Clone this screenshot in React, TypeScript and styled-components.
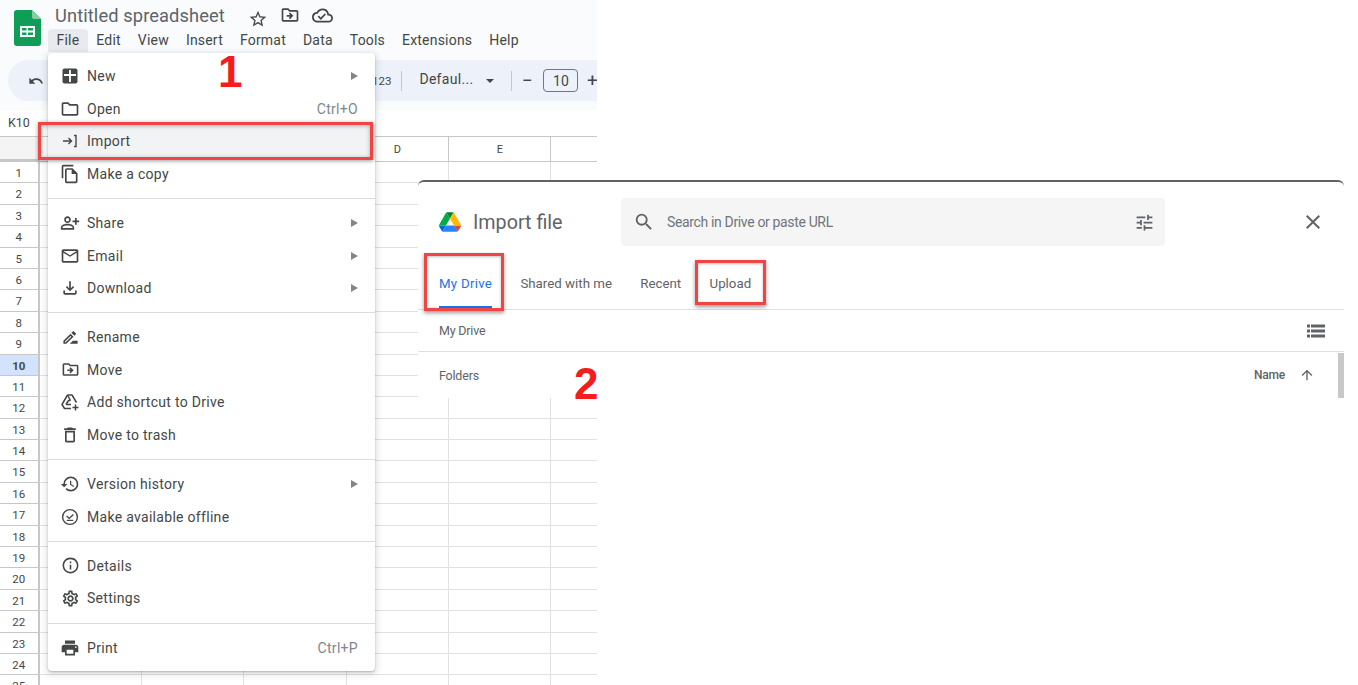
import styled, { createGlobalStyle } from 'styled-components';
import type { ReactNode } from 'react';
import {
  MdArrowUpward,
  MdClose,
  MdHistory,
  MdInfoOutline,
  MdOutlineCloudDone,
  MdOutlineDelete,
  MdOutlineDriveFileMove,
  MdOutlineDriveFileRenameOutline,
  MdOutlineEmail,
  MdOutlineFileCopy,
  MdOutlineFileDownload,
  MdOutlineFolder,
  MdOutlinePersonAddAlt,
  MdOutlineSettings,
  MdOutlineStarBorder,
  MdPrint,
  MdSearch,
  MdTune,
  MdUndo,
} from 'react-icons/md';

type MenuEntry = {
  label: string;
  icon: ReactNode;
  shortcut?: string;
  submenu?: boolean;
  active?: boolean;
};

const NewIcon = () => (
  <svg width="16" height="16" viewBox="0 0 16 16">
    <rect x="0.5" y="0.5" width="15" height="15" rx="2" fill="#444746" />
    <path d="M8 2v12M2 7h12" stroke="#fff" strokeWidth="1.8" fill="none" />
  </svg>
);

const ImportIcon = () => (
  <svg width="16" height="16" viewBox="0 0 16 16" fill="none" stroke="#444746" strokeWidth="1.4">
    <path d="M1 8h8M6.500 5l3 3-3 3" />
    <path d="M12 2.500h2v11h-2" />
  </svg>
);

const OfflineIcon = () => (
  <svg width="18" height="18" viewBox="0 0 18 18" fill="none" stroke="#444746" strokeWidth="1.4">
    <circle cx="9" cy="9" r="7.400" />
    <path d="M5.600 8l2.600 2.400L12.400 6.400M5.800 12.400h6.400" />
  </svg>
);

const AddShortcutIcon = () => (
  <svg width="20" height="20" viewBox="0 0 20 20" fill="none" stroke="#444746" strokeWidth="1.5">
    <path d="M7.500 3h4.500l4.500 7.500M7.500 3L2 12.500 4.500 16.500H11" strokeLinejoin="round" />
    <path d="M7.500 3l3 5.500M6 12.500l2.500-4 2 0M6 12.500h5" strokeLinejoin="round" />
    <path d="M15.500 12.500v6M12.500 15.500h6" />
  </svg>
);

const ListViewIcon = () => (
  <svg width="18" height="14" viewBox="0 0 18 14" fill="#5f6368">
    <rect x="0" y="0.500" width="3" height="3" />
    <rect x="4" y="0.500" width="14" height="3" />
    <rect x="0" y="5.500" width="3" height="3" />
    <rect x="4" y="5.500" width="14" height="3" />
    <rect x="0" y="10.500" width="3" height="3" />
    <rect x="4" y="10.500" width="14" height="3" />
  </svg>
);

const menuGroups: MenuEntry[][] = [
  [
    { label: 'New', icon: <NewIcon />, submenu: true },
    { label: 'Open', icon: <MdOutlineFolder size={20} />, shortcut: 'Ctrl+O' },
    { label: 'Import', icon: <ImportIcon />, active: true },
    { label: 'Make a copy', icon: <MdOutlineFileCopy size={20} /> },
  ],
  [
    { label: 'Share', icon: <MdOutlinePersonAddAlt size={20} />, submenu: true },
    { label: 'Email', icon: <MdOutlineEmail size={20} />, submenu: true },
    { label: 'Download', icon: <MdOutlineFileDownload size={20} />, submenu: true },
  ],
  [
    { label: 'Rename', icon: <MdOutlineDriveFileRenameOutline size={19} /> },
    { label: 'Move', icon: <MdOutlineDriveFileMove size={19} /> },
    { label: 'Add shortcut to Drive', icon: <AddShortcutIcon /> },
    { label: 'Move to trash', icon: <MdOutlineDelete size={20} /> },
  ],
  [
    { label: 'Version history', icon: <MdHistory size={20} />, submenu: true },
    { label: 'Make available offline', icon: <OfflineIcon /> },
  ],
  [
    { label: 'Details', icon: <MdInfoOutline size={19} /> },
    { label: 'Settings', icon: <MdOutlineSettings size={19} /> },
  ],
  [{ label: 'Print', icon: <MdPrint size={20} />, shortcut: 'Ctrl+P' }],
];

const menuBarItems = ['File', 'Edit', 'View', 'Insert', 'Format', 'Data', 'Tools', 'Extensions', 'Help'];
// A, B and C sit under the open menu, so only these letters show
const columns = ['', '', '', 'D', 'E', ''];
const rows = Array.from({ length: 25 }, (_, i) => i + 1);

function SheetGrid() {
  return (
    <Grid>
      <Corner />
      {columns.map((c, i) => (
        <ColumnHead key={i}>{c}</ColumnHead>
      ))}
      {rows.map((r) => (
        <GridRow key={r}>
          <RowHead $selected={r === 10}>{r}</RowHead>
          {columns.map((_, i) => (
            <Cell key={i} />
          ))}
        </GridRow>
      ))}
    </Grid>
  );
}

function FileMenu() {
  return (
    <Menu>
      {menuGroups.map((group, i) => (
        <MenuGroup key={i}>
          {group.map((item) => (
            <MenuItem key={item.label} $active={item.active}>
              <MenuIcon>{item.icon}</MenuIcon>
              <span>{item.label}</span>
              {item.shortcut && <Shortcut>{item.shortcut}</Shortcut>}
              {item.submenu && <SubArrow />}
              {item.active && <Highlight />}
            </MenuItem>
          ))}
        </MenuGroup>
      ))}
    </Menu>
  );
}

function ImportDialog() {
  return (
    <Dialog>
      <DialogHead>
        <svg width="22" height="20" viewBox="0 0 87.3 78">
          <path d="m6.6 66.85 3.85 6.65c.8 1.4 1.95 2.5 3.3 3.3l13.75-23.8h-27.5c0 1.55.4 3.1 1.2 4.5z" fill="#0066da" />
          <path d="m43.65 25-13.75-23.8c-1.35.8-2.5 1.9-3.3 3.3l-25.4 44a9.06 9.06 0 0 0 -1.2 4.5h27.5z" fill="#00ac47" />
          <path d="m73.55 76.8c1.35-.8 2.5-1.9 3.3-3.3l1.6-2.75 7.65-13.25c.8-1.4 1.2-2.95 1.2-4.5h-27.502l5.852 11.5z" fill="#ea4335" />
          <path d="m43.65 25 13.75-23.8c-1.35-.8-2.9-1.2-4.5-1.2h-18.5c-1.6 0-3.15.45-4.5 1.2z" fill="#00832d" />
          <path d="m59.8 53h-32.3l-13.75 23.8c1.35.8 2.9 1.2 4.5 1.2h50.8c1.6 0 3.15-.45 4.5-1.2z" fill="#2684fc" />
          <path d="m73.4 26.5-12.7-22c-.8-1.4-1.95-2.5-3.3-3.3l-13.75 23.8 16.15 28h27.45c0-1.55-.4-3.1-1.2-4.5z" fill="#ffba00" />
        </svg>
        <DialogTitle>Import file</DialogTitle>
        <SearchBox>
          <MdSearch size={22} color="#5f6368" />
          <SearchText>Search in Drive or paste URL</SearchText>
          <MdTune size={21} color="#5f6368" />
        </SearchBox>
        <CloseButton>
          <MdClose size={24} color="#5f6368" />
        </CloseButton>
      </DialogHead>
      <Tabs>
        <Tab $active>
          My Drive
          <TabBox $top={0} $bottom={-5} $left={-15} $right={-12} />
        </Tab>
        <Tab>Shared with me</Tab>
        <Tab>Recent</Tab>
        <Tab>
          Upload
          <TabBox $top={7} $bottom={1} $left={-15} $right={-15} />
        </Tab>
      </Tabs>
      <PathRow>
        <span>My Drive</span>
        <ListViewIcon />
      </PathRow>
      <ListHead>
        <span>Folders</span>
        <NameSort>
          Name
          <MdArrowUpward size={16} color="#5f6368" />
        </NameSort>
        <ScrollThumb />
      </ListHead>
    </Dialog>
  );
}

export default function App() {
  return (
    <>
      <GlobalStyle />
      <Page>
        <Sheet>
          <Header>
            <svg width="27" height="36" viewBox="0 0 27 36">
              <path d="M3 0h15l9 9v24a3 3 0 0 1-3 3H3a3 3 0 0 1-3-3V3a3 3 0 0 1 3-3z" fill="#0f9d58" />
              <path d="M18 0l9 9h-7a2 2 0 0 1-2-2z" fill="#87ce9e" />
              <path d="M6 16h15v11H6zM8 18v2.5h4.5V18zm6 0v2.5h5V18zm-6 4.500V25h4.500v-2.500zm6 0V25h5v-2.500z" fill="#fff" fillRule="evenodd" />
            </svg>
            <HeaderText>
              <TitleRow>
                <Title>Untitled spreadsheet</Title>
                <TitleIcons>
                  <MdOutlineStarBorder size={20} color="#444746" />
                  <MdOutlineDriveFileMove size={20} color="#444746" />
                  <MdOutlineCloudDone size={21} color="#444746" />
                </TitleIcons>
              </TitleRow>
              <MenuBar>
                {menuBarItems.map((m) => (
                  <MenuBarItem key={m} $open={m === 'File'}>
                    {m}
                  </MenuBarItem>
                ))}
              </MenuBar>
            </HeaderText>
          </Header>
          <ToolbarStrip>
            <Toolbar>
              <MdUndo size={16} color="#444746" />
              <NumberFormat>123</NumberFormat>
              <ToolDivider />
              <FontName>Defaul...</FontName>
              <Caret />
              <ToolDivider />
              <SizeGroup>
                <SizeButton>−</SizeButton>
                <SizeInput>10</SizeInput>
                <SizeButton>+</SizeButton>
              </SizeGroup>
            </Toolbar>
          </ToolbarStrip>
          <NameBox>K10</NameBox>
          <SheetGrid />
          <FileMenu />
        </Sheet>
        <ImportDialog />
        <StepNumber $x={218} $y={46}>1</StepNumber>
        <StepNumber $x={574} $y={358}>2</StepNumber>
      </Page>
    </>
  );
}

const GlobalStyle = createGlobalStyle`
  html, body {
    margin: 0;
    padding: 0;
    background: #fff;
  }
  body {
    font-family: Roboto, "Liberation Sans", sans-serif;
  }
`;

const Page = styled.div`
  position: relative;
  width: 1358px;
  height: 685px;
  overflow: hidden;
  background: #fff;
`;

const Sheet = styled.div`
  position: relative;
  width: 597px;
  height: 685px;
  overflow: hidden;
`;

const Header = styled.div`
  height: 60px;
  box-sizing: border-box;
  padding: 2px 0 0 14px;
  display: flex;
  align-items: flex-start;
  gap: 14px;
  background: #f9fbfd;
  svg:first-child {
    margin-top: 8px;
  }
`;

const HeaderText = styled.div`
  display: flex;
  flex-direction: column;
`;

const TitleRow = styled.div`
  display: flex;
  align-items: center;
  height: 26px;
`;

const Title = styled.div`
  font-size: 18.3px;
  color: #5f6368;
  letter-spacing: 0.1px;
`;

const TitleIcons = styled.div`
  display: flex;
  align-items: center;
  gap: 12px;
  margin-left: 23px;
`;

const MenuBar = styled.div`
  display: flex;
  margin: 1px 0 0 -7px;
`;

const MenuBarItem = styled.div<{ $open?: boolean }>`
  height: 23px;
  line-height: 23px;
  padding: 0 8.5px;
  font-size: 14px;
  letter-spacing: 0.2px;
  color: #444746;
  border-radius: 4px 4px 0 0;
  background: ${(p) => (p.$open ? '#e8eaed' : 'transparent')};
`;

const ToolbarStrip = styled.div`
  height: 50px;
  box-sizing: border-box;
  padding-left: 8px;
  background: #f9fbfd;
`;

const Toolbar = styled.div`
  width: 640px;
  height: 41px;
  box-sizing: border-box;
  padding-left: 20px;
  display: flex;
  align-items: center;
  border-radius: 21px;
  background: #edf2fa;
`;

const NumberFormat = styled.span`
  margin-left: 328px;
  font-size: 11.5px;
  color: #444746;
`;

const ToolDivider = styled.span`
  width: 1px;
  height: 20px;
  margin: 0 10px;
  background: #c7c7c7;
`;

const FontName = styled.span`
  margin-left: 7px;
  padding-bottom: 3px;
  font-size: 14px;
  letter-spacing: 0.3px;
  color: #444746;
`;

const Caret = styled.span`
  margin: 0 7px 0 13px;
  width: 0;
  height: 0;
  border-left: 4px solid transparent;
  border-right: 4px solid transparent;
  border-top: 4px solid #444746;
`;

const SizeGroup = styled.div`
  display: flex;
  align-items: center;
  margin-left: -6px;
`;

const SizeButton = styled.span`
  width: 22px;
  text-align: center;
  font-size: 19px;
  color: #444746;
`;

const SizeInput = styled.span`
  width: 35px;
  height: 23px;
  box-sizing: border-box;
  margin: 0 3px 0 5px;
  line-height: 22px;
  text-align: center;
  font-size: 14px;
  color: #444746;
  border: 1px solid #747775;
  border-radius: 4px;
`;

const NameBox = styled.div`
  height: 27px;
  box-sizing: border-box;
  padding: 5px 0 0 8px;
  font-size: 12.5px;
  color: #444746;
  border-bottom: 1px solid #c7c7c7;
`;

const Grid = styled.div`
  display: grid;
  grid-template-columns: 39.5px repeat(6, 102.4px);
  grid-template-rows: 25px repeat(25, 21.4px);
`;

const Corner = styled.div`
  box-sizing: border-box;
  border-right: 2px solid #c7c7c7;
  border-bottom: 3px solid #c7c7c7;
  background: #f4f4f4;
`;

const ColumnHead = styled.div`
  box-sizing: border-box;
  line-height: 26px;
  text-align: center;
  font-size: 11px;
  color: #444746;
  border-right: 1px solid #c7c7c7;
  border-bottom: 1px solid #c7c7c7;
`;

const GridRow = styled.div`
  display: contents;
`;

const RowHead = styled.div<{ $selected?: boolean }>`
  box-sizing: border-box;
  line-height: 23px;
  text-align: center;
  font-size: 11.5px;
  font-weight: ${(p) => (p.$selected ? 700 : 400)};
  color: #444746;
  background: ${(p) => (p.$selected ? '#d3e3fd' : '#fff')};
  border-right: 2px solid #c7c7c7;
  border-bottom: 1px solid #c7c7c7;
`;

const Cell = styled.div`
  box-sizing: border-box;
  border-right: 1px solid #e1e1e1;
  border-bottom: 1px solid #e1e1e1;
`;

const Menu = styled.div`
  position: absolute;
  left: 48px;
  top: 53px;
  width: 327px;
  box-sizing: border-box;
  padding: 7px 0;
  background: #fff;
  border-radius: 4px;
  box-shadow: 0 2px 6px 2px rgba(60, 64, 67, 0.15), 0 1px 2px rgba(60, 64, 67, 0.3);
`;

const MenuGroup = styled.div`
  & + & {
    margin-top: 8px;
    padding-top: 7.8px;
    border-top: 1px solid #dadce0;
  }
`;

const MenuItem = styled.div<{ $active?: boolean }>`
  position: relative;
  height: 32.5px;
  display: flex;
  align-items: center;
  padding: 0 17px 0 12px;
  font-size: 14px;
  letter-spacing: 0.3px;
  color: #444746;
  background: ${(p) => (p.$active ? '#f1f3f4' : 'transparent')};
`;

const MenuIcon = styled.span`
  width: 20px;
  margin-right: 7px;
  display: flex;
  justify-content: center;
  color: #444746;
`;

const Shortcut = styled.span`
  margin-left: auto;
  color: #80868b;
`;

const SubArrow = styled.span`
  margin-left: auto;
  width: 0;
  height: 0;
  border-top: 4px solid transparent;
  border-bottom: 4px solid transparent;
  border-left: 7px solid #80868b;
`;

const Highlight = styled.div`
  position: absolute;
  inset: -3px 2px -2px -10px;
  border: 3px solid #f04545;
  box-shadow: 0 1px 4px rgba(0, 0, 0, 0.4), inset 0 1px 4px rgba(0, 0, 0, 0.3);
`;

const StepNumber = styled.div<{ $x: number; $y: number }>`
  position: absolute;
  left: ${(p) => p.$x}px;
  top: ${(p) => p.$y}px;
  font-family: "Liberation Sans", Arial, sans-serif;
  font-size: 44px;
  line-height: 52px;
  font-weight: 700;
  color: #f41c1c;
`;

const Dialog = styled.div`
  position: absolute;
  left: 418px;
  top: 180px;
  width: 926px;
  height: 218px;
  box-sizing: border-box;
  background: #fff;
  border-top: 2px solid #5f6368;
  border-radius: 6px 6px 0 0;
`;

const DialogHead = styled.div`
  display: flex;
  align-items: center;
  height: 48px;
  margin-top: 16px;
  padding: 0 19px 0 21px;
`;

const DialogTitle = styled.div`
  margin-left: 12px;
  width: 148px;
  font-size: 19.7px;
  color: #5f6368;
`;

const SearchBox = styled.div`
  width: 544px;
  height: 48px;
  box-sizing: border-box;
  padding: 0 10px 0 12px;
  display: flex;
  align-items: center;
  background: #f5f5f5;
  border-radius: 4px;
`;

const SearchText = styled.span`
  flex: 1;
  margin-left: 12px;
  font-size: 14px;
  letter-spacing: -0.35px;
  color: #70757a;
`;

const CloseButton = styled.div`
  margin-left: auto;
  display: flex;
`;

const Tabs = styled.div`
  height: 64px;
  box-sizing: border-box;
  padding: 7px 0 0 21px;
  display: flex;
  gap: 28.3px;
  border-bottom: 1px solid #e0e0e0;
`;

const Tab = styled.div<{ $active?: boolean }>`
  position: relative;
  height: 55px;
  box-sizing: border-box;
  padding-top: 23px;
  font-size: 13.3px;
  letter-spacing: ${(p) => (p.$active ? '0.25px' : '0')};
  color: ${(p) => (p.$active ? '#1a73e8' : '#5f6368')};
  border-bottom: 2px solid ${(p) => (p.$active ? '#1a73e8' : 'transparent')};
`;

const TabBox = styled.div<{ $top: number; $bottom: number; $left: number; $right: number }>`
  position: absolute;
  top: ${(p) => p.$top}px;
  bottom: ${(p) => p.$bottom}px;
  left: ${(p) => p.$left}px;
  right: ${(p) => p.$right}px;
  border: 3px solid #f04545;
  box-shadow: 0 2px 4px rgba(0, 0, 0, 0.4), inset 0 1px 3px rgba(0, 0, 0, 0.25);
`;

const PathRow = styled.div`
  height: 42px;
  box-sizing: border-box;
  padding: 0 19px 0 21px;
  display: flex;
  align-items: center;
  justify-content: space-between;
  font-size: 12.5px;
  letter-spacing: -0.2px;
  color: #5f6368;
  border-bottom: 1px solid #e0e0e0;
`;

const ListHead = styled.div`
  position: relative;
  height: 46px;
  box-sizing: border-box;
  padding: 0 29px 0 21px;
  display: flex;
  align-items: center;
  justify-content: space-between;
  font-size: 12.5px;
  letter-spacing: -0.2px;
  color: #5f6368;
`;

const NameSort = styled.span`
  display: flex;
  align-items: center;
  gap: 14px;
  font-size: 12px;
  font-weight: 500;
`;

const ScrollThumb = styled.div`
  position: absolute;
  right: 0;
  top: 1px;
  bottom: 0;
  width: 6px;
  background: #c8c8c8;
`;
